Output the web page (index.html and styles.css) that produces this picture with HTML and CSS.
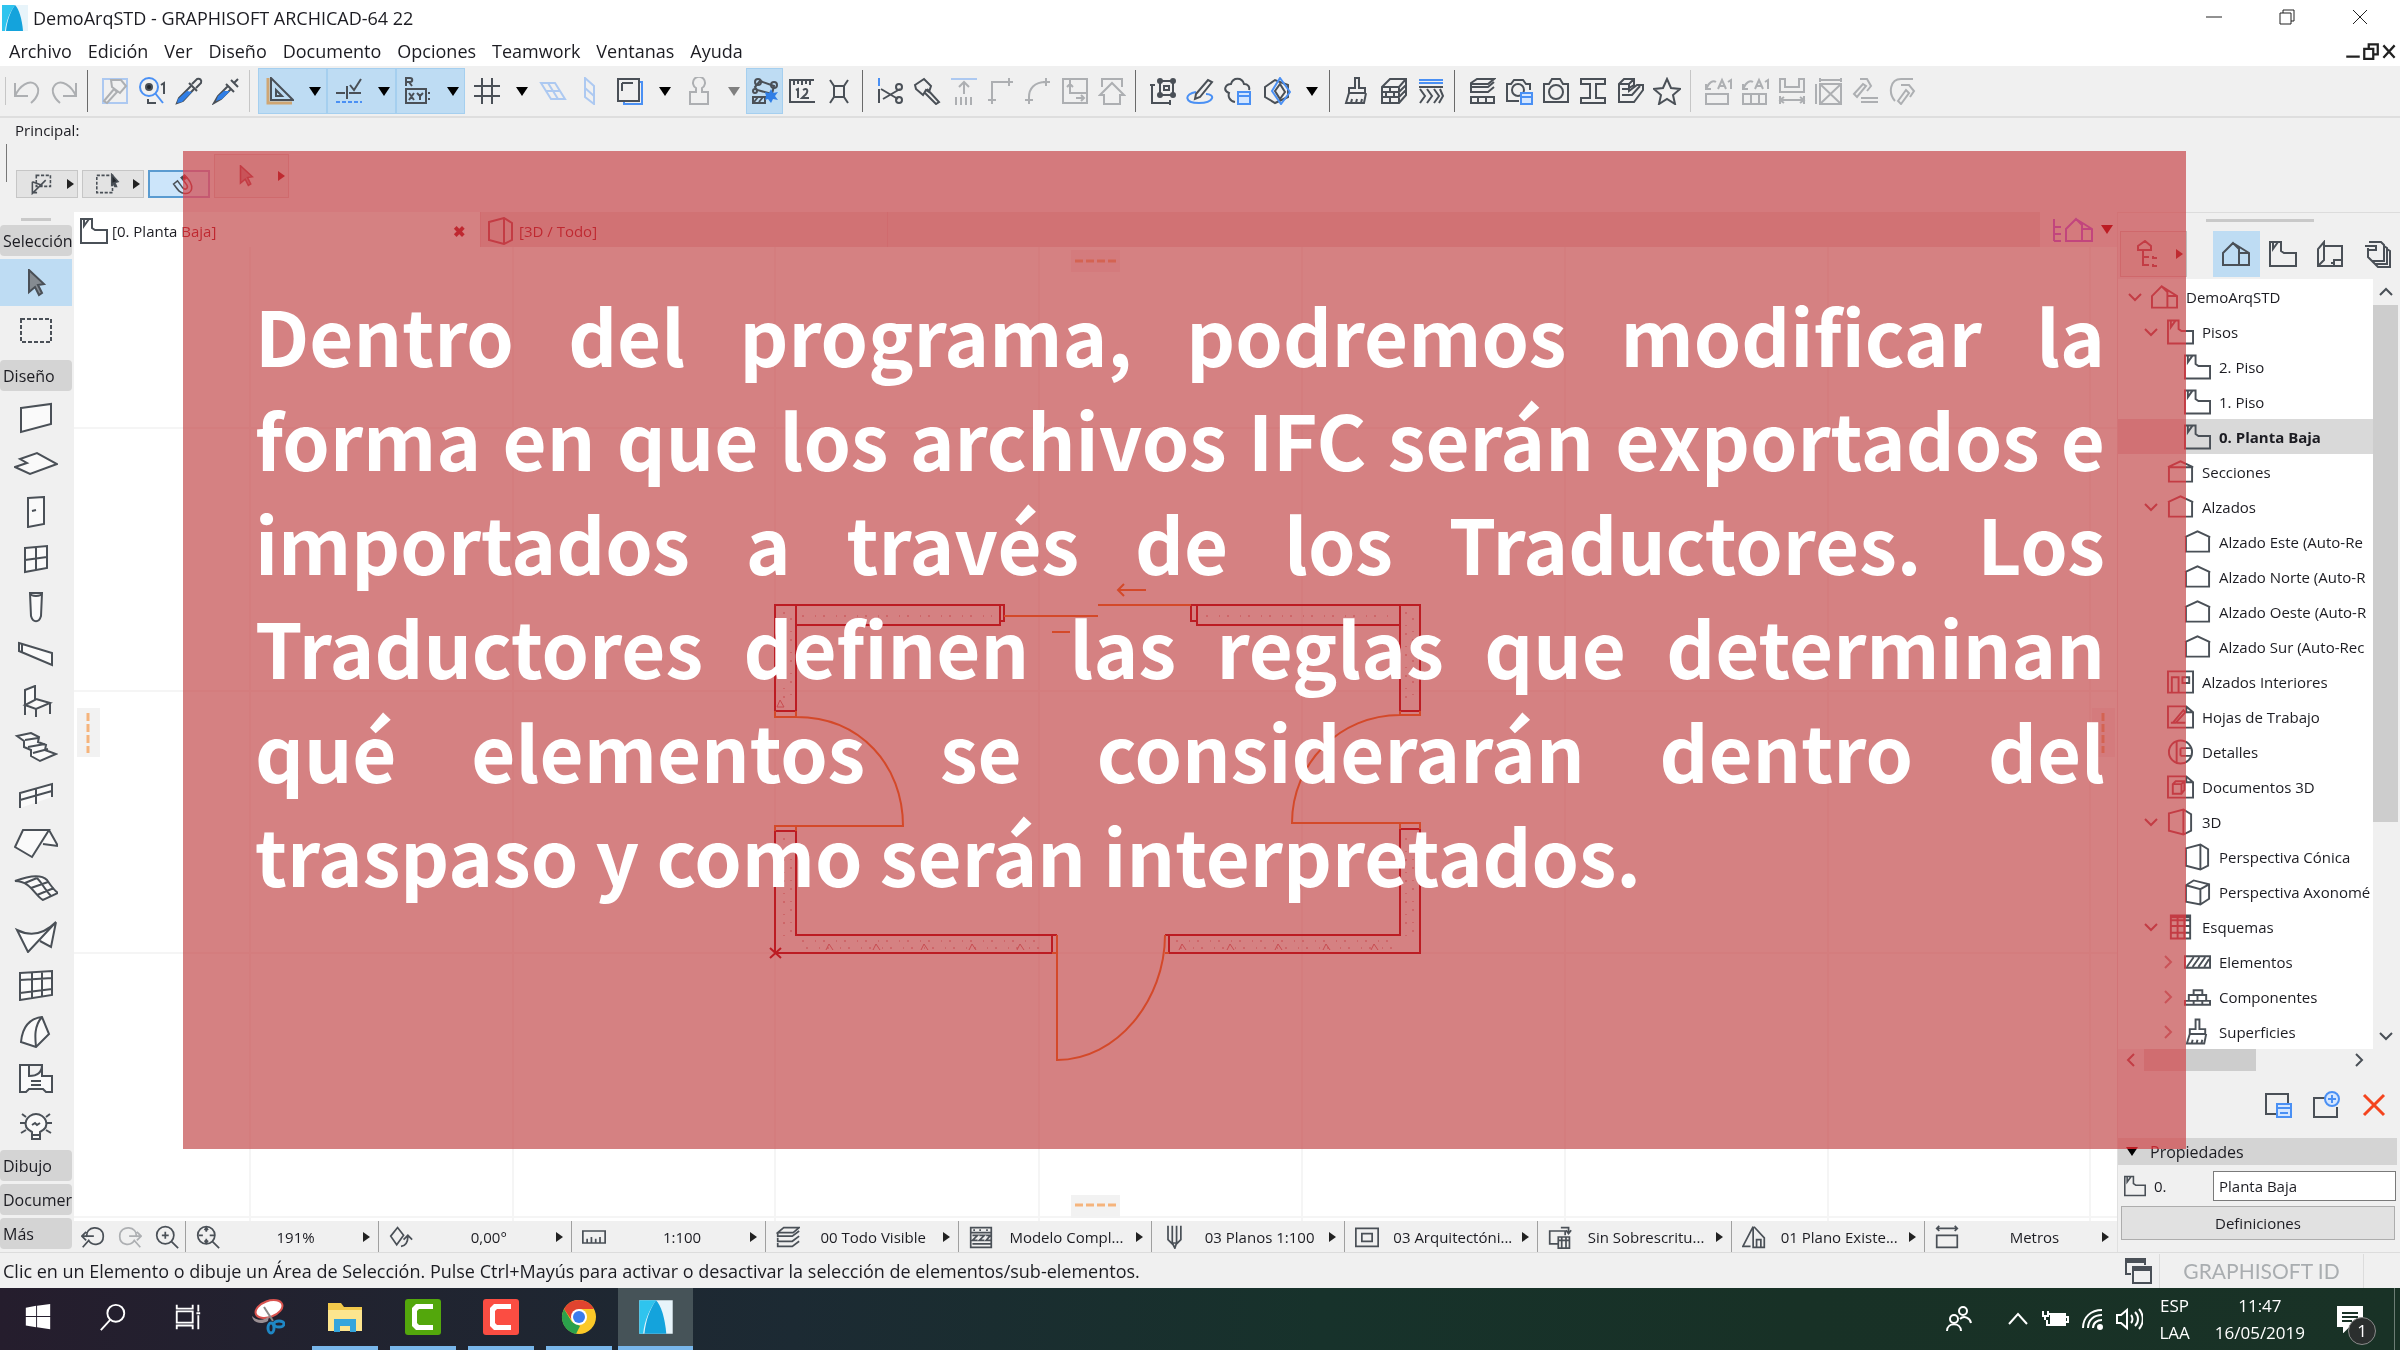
FILE: index.html
```html
<!DOCTYPE html>
<html lang="es">
  <head>
    <meta charset="UTF-8" />
    <title>DemoArqSTD - GRAPHISOFT ARCHICAD-64 22</title>
    <link rel="stylesheet" href="styles.css">
  </head>
  <body>
    <!-- Iconos -->
    <svg class="sprite" aria-hidden="true">
      <symbol id="logo" viewBox="0 0 28 28"><path fill="#e8f4fa" stroke="none" d="M1 1h26v26H1z"/><path fill="#2fc4ee" stroke="none" d="M1 1h13C9 8 5 17 4 27H1z"/><path fill="#14a3dc" stroke="none" d="M14 1c4 4 7 14 8 26H5C6 17 9 8 14 1z"/></symbol>
      <symbol id="undo" viewBox="0 0 28 28"><path d="M2 6v13h13M2 19C7 8 16 3 22 7c6 5 3 13-4 19"/></symbol>
      <symbol id="redo" viewBox="0 0 28 28"><path d="M26 6v13H13M26 19C21 8 12 3 6 7c-6 5-3 13 4 19"/></symbol>
      <symbol id="pickhammer" viewBox="0 0 28 28"><path class="blue" d="M2 2h24v24H2z"/><path d="M3 24 13 12l3 3L6 26zM10 3h10l5 6-6 7-8-6z"/></symbol>
      <symbol id="finder" viewBox="0 0 28 28"><circle class="blue" cx="11" cy="10" r="9"/><path class="blue" d="m17 16 8 10"/><circle class="solid" cx="11" cy="10" r="3"/><path d="M23 8l3-2v11M10 22v4h8"/></symbol>
      <symbol id="dropper" viewBox="0 0 28 28"><path d="m17 7 5-5c3-1 5 1 4 4l-5 5M14 6l8 8"/><path d="M16 9 4 21l-2 5 6-2 11-12"/><path class="bluefill" d="m12 14-9 8-1 4 5-1 10-10z"/></symbol>
      <symbol id="syringe" viewBox="0 0 28 28"><path d="m19 3 7 7M22 6l4-4M14 7l8 8M16 9 6 19l-4 7 7-4 10-10"/><path class="bluefill" d="m12 14-6 5-2 5 6-2 8-8z"/></symbol>
      <symbol id="setsquare" viewBox="0 0 28 28"><path d="M5 1v22h22zM10 13v6h6z"/><path class="tan" d="M2 1v25h24"/></symbol>
      <symbol id="snapline" viewBox="0 0 28 28"><path d="M1 16h9m4 0h12M12 9v13M15 8l4 5 7-11"/><path class="blue dash" d="M1 25h26"/></symbol>
      <symbol id="coord" viewBox="0 0 28 28"><path d="M2 9V1h4c3 0 3 4 0 4H2m3 0 3 4M2 12h20v14H2zM5 16l5 7m0-7-5 7M13 16l3 3 3-3m-3 3v4M25 15v2m0 4v2"/></symbol>
      <symbol id="grid" viewBox="0 0 28 28"><path d="M9 1v26M19 1v26M1 9h26M1 19h26"/></symbol>
      <symbol id="plane" viewBox="0 0 28 28"><path class="blue" d="M2 6h14l10 16H12zM7 14h14M9 6l10 16"/></symbol>
      <symbol id="vplane" viewBox="0 0 28 28"><path class="blue" d="M9 1v19l9 7V9zM9 11l9 8"/></symbol>
      <symbol id="sheets" viewBox="0 0 28 28"><path class="blue" d="M24 5h2v22H8v-2"/><path d="M2 2h21v22H2zM6 6v8M6 6h11"/></symbol>
      <symbol id="weight" viewBox="0 0 28 28"><path d="M11 11a6 6 0 1 1 6 0v4h6v12H5V15h6z"/></symbol>
      <symbol id="suspend" viewBox="0 0 28 28"><path d="m4 10 5-6 14 5-2 8L6 13z"/><circle cx="7" cy="5" r="3"/><circle cx="23" cy="8" r="3"/><circle cx="4" cy="14" r="2"/><path d="M2 20h12v6H2zm1 5 4-5m1 5 4-5"/><path class="bluefill" d="m20 12 2 4 5-1-3 4 3 4-5-1-2 4-3-4-3 1 1-4-1-4 4 1z"/></symbol>
      <symbol id="ruler12" viewBox="0 0 28 28"><path d="M26 3H2v22h25M6 3v5m4-5v4m4-4v5m4-4v3m4-4v5M8 13l2-1v9m5-8c5-3 6 2 1 6l-2 2h7"/></symbol>
      <symbol id="nodes" viewBox="0 0 28 28"><path d="M9 9h10v11H9zM5 3l4 6M23 3l-4 6M5 26l4-6m14 6-4-6"/></symbol>
      <symbol id="scissors" viewBox="0 0 28 28"><path class="blue" d="M3 1v8"/><path d="M3 12v14M5 12l17 10M7 22 24 12"/><circle cx="23" cy="10" r="3"/><circle cx="23" cy="23" r="3"/></symbol>
      <symbol id="axe" viewBox="0 0 28 28"><path d="M2 8 11 2l7 7-2 6-3-2-3 5-7-6zM14 12l12 13-3 2-12-12"/></symbol>
      <symbol id="raise" viewBox="0 0 28 28"><path class="blue" d="M1 2h26"/><path d="M14 5v12m-5-7 5-5 5 5M6 20v8m5-8v8m5-8v8m5-8v8"/></symbol>
      <symbol id="corner" viewBox="0 0 28 28"><path d="M5 20V5h17M1 23h8m-4-3v7M22 1v8m-3-4h7"/></symbol>
      <symbol id="fillet" viewBox="0 0 28 28"><path d="M5 20C5 12 10 5 22 5M1 23h8m-4-3v7M22 1v8m-3-4h7"/></symbol>
      <symbol id="resize" viewBox="0 0 28 28"><path d="M2 2h24v24H2zM9 2v14h17M9 16V7m-3 3 3-3 3 3M15 21h8m-3-3 3 3-3 3"/></symbol>
      <symbol id="explode" viewBox="0 0 28 28"><path d="M4 10V2h20v8M2 18 14 6l12 12h-4v9H6v-9z"/></symbol>
      <symbol id="trace" viewBox="0 0 28 28"><path d="M11 4h13v14H11z"/><circle cx="11" cy="4" r="2"/><circle cx="24" cy="4" r="2"/><circle cx="11" cy="18" r="2"/><circle cx="24" cy="18" r="2"/><path d="M3 8v18h18M1 8h5M21 23v5M15 9h5v4h-5z"/></symbol>
      <symbol id="markup" viewBox="0 0 28 28"><path class="blue" d="M10 15c-12 2-12 11 3 11s17-9 7-9"/><path d="M10 17 22 3l4 2-12 15-5 2z"/></symbol>
      <symbol id="cloud" viewBox="0 0 28 28"><path d="M12 25c-6-1-7-6-6-9-7-3-3-9 2-9 2-7 11-7 13 0 4 0 6 3 5 6"/><path class="bluebox" d="M15 15h12v12H15zM15 19h12"/></symbol>
      <symbol id="box" viewBox="0 0 28 28"><path d="M2 10 12 3l13 5v12l-13 6-10-6z"/><path class="blue" d="m17 1 10 14-9 12L9 14z"/><path d="m17 7 5 8-5 7-5-8z"/></symbol>
      <symbol id="brush" viewBox="0 0 28 28"><path d="M12 1h4v10h6v5H6v-5h6zM6 16 3 26h18l2-10M8 26l1-4m4 4 1-4m4 4 1-4"/></symbol>
      <symbol id="bricks" viewBox="0 0 28 28"><path d="M2 10 10 2h16v16l-7 8H2zM2 10h17l7-8M19 10v16M2 15h17l7-7M2 20h17l7-7M10 10v5m-4 0v5m8-5v5m-4 0v6"/></symbol>
      <symbol id="hatch" viewBox="0 0 28 28"><path class="blue" d="M2 3h24M2 6h24"/><path d="M2 10h24M3 12l5 7-5 7m7-14 5 7-5 7m7-14 5 7-5 7m6-14 3 7-4 7"/></symbol>
      <symbol id="layers" viewBox="0 0 28 28"><path d="m3 6 6-4h17l-6 5H3zM3 6v4h17l6-5M3 10v5h17l6-5M3 20h23v6H3zm7 0v6m8-6v6"/></symbol>
      <symbol id="camlock" viewBox="0 0 28 28"><path d="M14 24H2V7h4l3-4h9l3 4h4v6"/><circle cx="13" cy="13" r="6"/><path class="bluebox" d="M16 16h11v11H16zM16 20h11"/></symbol>
      <symbol id="camera" viewBox="0 0 28 28"><path d="M2 7h5l3-5h8l3 5h5v18H2z"/><circle cx="14" cy="15" r="7"/></symbol>
      <symbol id="beamprofile" viewBox="0 0 28 28"><path d="M2 2h24v5h-9v14h9v5H2v-5h9V7H2z"/></symbol>
      <symbol id="profile3d" viewBox="0 0 28 28"><path d="m3 7 5-5h10v6l-5 3v3l8-6h6v5l-9 12H3zM3 7h10m0 0 5-5M6 12h7v-5M6 18h10l8-9"/></symbol>
      <symbol id="star" viewBox="0 0 28 28"><path d="m14 2 4 9 9 1-7 6 2 9-8-5-8 5 2-9-7-6 9-1z"/></symbol>
      <symbol id="label1" viewBox="0 0 28 28"><path d="M2 7v5h5M2 12C5 5 9 3 12 5M14 12l4-9 4 9m-7-3h6M24 5l3-2v9M2 17h22v10H2z"/></symbol>
      <symbol id="label2" viewBox="0 0 28 28"><path d="M2 7v5h5M2 12C5 5 9 3 12 5M14 12l4-9 4 9m-7-3h6M24 5l3-2v9M2 17h23v10H2zm8 0v10m8-10v10"/></symbol>
      <symbol id="dimension" viewBox="0 0 28 28"><path d="M2 2v13h24V2h-5v8H7V2zM2 19v8m24-8v8M2 23h24M6 20l-4 3 4 3m16-6 4 3-4 3"/></symbol>
      <symbol id="areabox" viewBox="0 0 28 28"><path d="M5 7h21v20H5zM5 7l21 20M26 7 5 27M5 3h21M5 1v4M26 1v4M1 7v20"/></symbol>
      <symbol id="hammer" viewBox="0 0 28 28"><path d="m2 17 9-10 3 2-9 11zM8 2h7l4 7-4 5M9 21h17M9 25h17"/></symbol>
      <symbol id="hammer2" viewBox="0 0 28 28"><path d="M6 24C-1 16 1 2 12 2h12M9 24l8-11 3 3-8 11zM12 8h8l5 6-4 6"/></symbol>
      <symbol id="editnodes" viewBox="0 0 28 28"><path class="dash" d="M8 3h18v14H8z"/><path d="M3 11v15L20 9M3 11l13 5M3 25h6"/></symbol>
      <symbol id="marqueearrow" viewBox="0 0 28 28"><path class="dash" d="M1 3h20v22H1z"/><path class="solid" d="m20 2 8 9-4 1 2 5h-2l-2-4-2 2z"/></symbol>
      <symbol id="magnet" viewBox="0 0 28 28"><path d="m2 14 5-4 6 8c4 5 9 1 5-4l-6-8 4-3c15 14 9 24 0 23-6 0-9-5-14-12z"/><path class="solid" d="m12 6 4-3 3 3-4 3z"/></symbol>
      <symbol id="pointer" viewBox="0 0 28 28"><path class="grey" d="m7 1 15 14-6 1 4 8-3 2-4-8-6 5z"/></symbol>
      <symbol id="story" viewBox="0 0 28 28"><path d="M1 2h11v9l3 2h12v13H1zM4 2v7l5-7"/></symbol>
      <symbol id="cone" viewBox="0 0 28 28"><path d="m2 5 15-4 8 5v17l-8 4-15-4zM17 1v26"/></symbol>
      <symbol id="axon" viewBox="0 0 28 28"><path d="m2 7 8-5 16 4v15l-9 6-15-3zM2 7l15 4 9-5M17 11v16"/></symbol>
      <symbol id="house" viewBox="0 0 28 28"><path d="M1 25V13L11 3l6 6v16zM11 3l16 10v12H17M17 13h10"/></symbol>
      <symbol id="housetree" viewBox="0 0 42 28"><path d="M15 25V13L25 3l6 6v16zM25 3l16 10v12H31M31 13h10M3 3v22M3 11h7M3 18h7M3 25h7"/></symbol>
      <symbol id="elev" viewBox="0 0 28 28"><path d="M1 9 14 3l13 6h-1v15H2V9"/></symbol>
      <symbol id="section" viewBox="0 0 28 28"><path d="M1 9 14 3l13 6h-1v15H2V9h24"/></symbol>
      <symbol id="layout" viewBox="0 0 28 28"><path d="M8 6h18v20H2V9l6-7v18l-6 6M18 26v-6h8M15 23h3"/></symbol>
      <symbol id="book" viewBox="0 0 28 28"><path d="M6 2h12l3 3v16H9l-4-4V8M2 6h11v4H5M21 6l3 2v16H12l-3-3M24 9l3 2v16H15l-3-3"/></symbol>
      <symbol id="tree" viewBox="0 0 28 28"><path d="M4 10V6l7-5 6 5v4zM9 10v15h6M9 17h6M19 16v2h4m-4 6v2h4"/></symbol>
      <symbol id="interior" viewBox="0 0 28 28"><path d="M1 3h26v22H1zM5 25V9h7v16M16 9h7v6h-7z"/></symbol>
      <symbol id="worksheet" viewBox="0 0 28 28"><path d="M1 3h19l7 6v16H1zM20 3v6h7M6 20 17 7l2 2L9 20H4m6 0h9"/></symbol>
      <symbol id="detail" viewBox="0 0 28 28"><circle cx="14" cy="14" r="12"/><path d="M10 3v22M14 10h12M14 18h12M14 10v8"/></symbol>
      <symbol id="doc3d" viewBox="0 0 28 28"><path d="M1 3h19l7 6v16H1zM20 3v6h7"/><path d="m6 11 3-3h9v9l-3 4H6zM6 11h9v9m0-9 3-3"/></symbol>
      <symbol id="schedule" viewBox="0 0 28 28"><path d="M4 2h20v24H4zM11 2v24M18 2v24M4 7h20M4 13h20M4 20h20M4 4h20"/></symbol>
      <symbol id="elements" viewBox="0 0 28 28"><path d="M1 8h26v12H1zM3 19l7-10m-1 10 7-10m-1 10 7-10m-1 10 5-8"/></symbol>
      <symbol id="components" viewBox="0 0 28 28"><path d="M10 7h9v5h-9zM5 12h18v6H5zm9 0v6M1 18h26v4H1zm9 0v4m9-4v4"/></symbol>
      <symbol id="marquee" viewBox="0 0 44 32"><path class="dash" d="M7 5h30v23H7z"/></symbol>
      <symbol id="wall" viewBox="0 0 44 32"><path d="m7 6 30-4v20L7 30z"/></symbol>
      <symbol id="slab" viewBox="0 0 44 32"><path d="m1 18 12-4-7-4 17-6 20 11-27 10z"/></symbol>
      <symbol id="door" viewBox="0 0 44 32"><path d="m14 2 16-1v27l-16 3zM18 15l4-1"/></symbol>
      <symbol id="window" viewBox="0 0 44 32"><path d="m11 5 22-2v22l-22 4zM22 4v23M11 17l22-3"/></symbol>
      <symbol id="column" viewBox="0 0 44 32"><path d="M16 2h12l-1 23c-2 7-8 7-10 0zM16 2c1 4 11 4 12 0"/></symbol>
      <symbol id="beam" viewBox="0 0 44 32"><path d="m5 5 33 10v12L5 13zM8 6v8"/></symbol>
      <symbol id="chair" viewBox="0 0 44 32"><path d="M11 30V5l10-4v14l-10 5 11 4 14-6-14-4M22 24v8M36 18v11"/></symbol>
      <symbol id="stair" viewBox="0 0 44 32"><path d="m3 4 14-3 8 4-1 5 8 3-1 5 11 4-16 7-9-5v-6l-7-3v-6zM11 8l13-2M14 15l17-3M19 21l15-4"/></symbol>
      <symbol id="railing" viewBox="0 0 44 32"><path d="M6 28V13l32-9v13M22 9v15M6 20l32-9"/></symbol>
      <symbol id="roof" viewBox="0 0 44 32"><path d="M9 3h26L18 30 1 20zM35 3l9 16-15-2"/></symbol>
      <symbol id="shell" viewBox="0 0 44 32"><path d="M1 7c16-6 27-6 32-1 4 6 8 11 11 13l-15 7C21 22 17 7 1 7zM11 9l12-5M17 14l17-6M23 21l17-7M23 4c6 6 7 11 14 18"/></symbol>
      <symbol id="meshsail" viewBox="0 0 44 32"><path d="M3 9c14 7 27 4 39-8L14 31zM42 1l-5 25-11-6"/></symbol>
      <symbol id="curtain" viewBox="0 0 44 32"><path d="m6 4 32-2v24L6 31zM18 3v26M28 2v25M6 11l32-2M6 24l32-4"/></symbol>
      <symbol id="morph" viewBox="0 0 44 32"><path d="M28 1C12 3 8 15 7 26l15 5 13-13zM28 1c-8 9-7 20-6 30"/></symbol>
      <symbol id="zone" viewBox="0 0 44 32"><path d="M6 2h22v11h10v16h-6l-3-3H15l-3 3H6zM15 2v11c9 0 13-4 13-11M17 18h10M17 22h10"/></symbol>
      <symbol id="lamp" viewBox="0 0 44 32"><path d="M18 22c-12-6-5-18 4-18s16 12 4 18v7h-8zM18 25h8M18 15l3-2 2 2 3-2M8 4l4 3M6 13h5M7 23l5-3M36 4l-4 3m6 6h-5m4 10-5-3"/></symbol>
      <symbol id="zoomback" viewBox="0 0 28 28"><path d="M7 14C4 1 26-1 26 13c0 11-13 12-17 5L2 26M1 13h14M6 8l-5 5 5 5"/></symbol>
      <symbol id="zoomnext" viewBox="0 0 28 28"><path d="M21 14C24 1 2-1 2 13c0 11 13 12 17 5l7 8M27 13H13M22 8l5 5-5 5"/></symbol>
      <symbol id="zoomin" viewBox="0 0 28 28"><circle cx="12" cy="12" r="10"/><path d="m19 19 8 8M12 8v8m-4-4h8"/></symbol>
      <symbol id="zoomfit" viewBox="0 0 28 28"><circle cx="12" cy="12" r="10"/><path d="m19 19 8 8M12 3v5m-2-2 2-3 2 3M12 21v-5m-2 2 2 3 2-3M3 12h5m13 0h-5"/></symbol>
      <symbol id="rotate" viewBox="0 0 28 28"><path d="m2 13 8-10 7 9-8 11zM14 25c6-1 8-5 8-12m-5 4 5-5 5 5"/></symbol>
      <symbol id="scale" viewBox="0 0 28 28"><path d="M1 7h26v14H1zM6 21v-5m5 5v-7m5 7v-5m5 5v-7"/></symbol>
      <symbol id="layerstack" viewBox="0 0 28 28"><path d="m2 9 7-6h18l-7 6zM2 9v4h17l8-6M2 15v4h17l8-6M2 21v4h17l8-6"/></symbol>
      <symbol id="model" viewBox="0 0 28 28"><path d="M2 3h24v23H2zM2 9h24M5 6h2m5 0h2m6 0h2M4 12h6l-6 6h6m2-6h6l-6 6h6m2-6h5l-5 6h5M4 22h22"/></symbol>
      <symbol id="pen" viewBox="0 0 28 28"><path d="M7 1v16l5 5V1M17 1v21l5-5V1M12 21h5l-2 6z"/></symbol>
      <symbol id="frame" viewBox="0 0 28 28"><path d="M1 4h26v21H1zM8 10h12v9H8z"/></symbol>
      <symbol id="override" viewBox="0 0 28 28"><path d="M12 22H2V7h18v5M12 14h13v13H12zm0 4h13m-9-4v13m5-13v13M15 3h9v6m-3-3 3 4 3-4"/></symbol>
      <symbol id="renovate" viewBox="0 0 28 28"><path d="m14 2 12 13v11H13V2L1 25h9M17 26v-9h5v9"/></symbol>
      <symbol id="units" viewBox="0 0 28 28"><path d="M2 12h24v14H2zM2 4h24M5 1 2 4l3 3m18-6 3 3-3 3"/></symbol>
      <symbol id="viewset" viewBox="0 0 28 28"><path d="M2 3h22v20H2z"/><path class="bluebox" d="M13 13h14v13H13zM13 17h14m-11 5h8"/></symbol>
      <symbol id="newfolder" viewBox="0 0 28 28"><path d="M14 7H2v19h23V16"/><circle class="bluebox" cx="20" cy="8" r="7"/><path class="blue" d="M20 4v8m-4-4h8"/></symbol>
      <symbol id="cross" viewBox="0 0 28 28"><path d="m4 4 20 20M24 4 4 24"/></symbol>
      <symbol id="down" viewBox="0 0 14 14"><path d="m1 4 6 6 6-6"/></symbol>
      <symbol id="right" viewBox="0 0 14 14"><path d="m4 1 6 6-6 6"/></symbol>
    </svg>

    <header class="titlebar">
      <svg class="app-logo"><use href="#logo"/></svg>
      <h1 class="app-title">DemoArqSTD - GRAPHISOFT ARCHICAD-64 22</h1>
      <button class="win-button" aria-label="Minimizar"><svg viewBox="0 0 16 16"><path d="M0 8h16"/></svg></button>
      <button class="win-button" aria-label="Restaurar"><svg viewBox="0 0 16 16"><path d="M1 4h11v11H1zM4 4V1h11v11h-3"/></svg></button>
      <button class="win-button" aria-label="Cerrar"><svg viewBox="0 0 16 16"><path d="m1 1 14 14M15 1 1 15"/></svg></button>
    </header>

    <nav class="menubar">
      <a href="#">Archivo</a>
      <a href="#">Edición</a>
      <a href="#">Ver</a>
      <a href="#">Diseño</a>
      <a href="#">Documento</a>
      <a href="#">Opciones</a>
      <a href="#">Teamwork</a>
      <a href="#">Ventanas</a>
      <a href="#">Ayuda</a>
      <div class="doc-buttons">
        <button aria-label="Minimizar documento"><svg viewBox="0 0 16 16"><path d="M2 13h12"/></svg></button>
        <button aria-label="Restaurar documento"><svg viewBox="0 0 16 16"><path d="M2 6h8v9H2zM6 6V2h8v9h-4"/></svg></button>
        <button aria-label="Cerrar documento"><svg viewBox="0 0 16 16"><path d="m3 3 10 11M13 3 3 14"/></svg></button>
      </div>
    </nav>

    <div class="toolbar">
      <span class="sep light first"></span>
      <button class="tb off" aria-label="Deshacer"><svg><use href="#undo"/></svg></button>
      <button class="tb off" aria-label="Rehacer"><svg><use href="#redo"/></svg></button>
      <span class="sep"></span>
      <button class="tb off" aria-label="Buscar y seleccionar"><svg><use href="#pickhammer"/></svg></button>
      <button class="tb" aria-label="Buscar"><svg><use href="#finder"/></svg></button>
      <button class="tb" aria-label="Capturar parámetros"><svg><use href="#dropper"/></svg></button>
      <button class="tb" aria-label="Inyectar parámetros"><svg><use href="#syringe"/></svg></button>
      <span class="sep light"></span>
      <button class="tb drop on" aria-label="Guías"><svg><use href="#setsquare"/></svg><i class="caret"></i></button>
      <button class="tb drop on" aria-label="Puntos de forzado"><svg><use href="#snapline"/></svg><i class="caret"></i></button>
      <button class="tb drop on" aria-label="Coordenadas"><svg><use href="#coord"/></svg><i class="caret"></i></button>
      <button class="tb drop" aria-label="Trama"><svg><use href="#grid"/></svg><i class="caret"></i></button>
      <button class="tb off" aria-label="Plano de edición"><svg><use href="#plane"/></svg></button>
      <button class="tb off" aria-label="Plano vertical"><svg><use href="#vplane"/></svg></button>
      <button class="tb drop" aria-label="Referencia"><svg><use href="#sheets"/></svg><i class="caret"></i></button>
      <button class="tb drop off" aria-label="Gravedad"><svg><use href="#weight"/></svg><i class="caret"></i></button>
      <button class="tb on" aria-label="Suspender grupos"><svg><use href="#suspend"/></svg></button>
      <button class="tb" aria-label="Medir"><svg><use href="#ruler12"/></svg></button>
      <button class="tb" aria-label="Nodos"><svg><use href="#nodes"/></svg></button>
      <span class="sep"></span>
      <button class="tb" aria-label="Recortar"><svg><use href="#scissors"/></svg></button>
      <button class="tb" aria-label="Dividir"><svg><use href="#axe"/></svg></button>
      <button class="tb off" aria-label="Ajustar"><svg><use href="#raise"/></svg></button>
      <button class="tb off" aria-label="Intersecar"><svg><use href="#corner"/></svg></button>
      <button class="tb off" aria-label="Empalme"><svg><use href="#fillet"/></svg></button>
      <button class="tb off" aria-label="Redimensionar"><svg><use href="#resize"/></svg></button>
      <button class="tb off" aria-label="Descomponer"><svg><use href="#explode"/></svg></button>
      <span class="sep"></span>
      <button class="tb" aria-label="Agrupar"><svg><use href="#trace"/></svg></button>
      <button class="tb" aria-label="Revisión"><svg><use href="#markup"/></svg></button>
      <button class="tb" aria-label="Nube"><svg><use href="#cloud"/></svg></button>
      <button class="tb drop" aria-label="Vista 3D"><svg><use href="#box"/></svg><i class="caret"></i></button>
      <span class="sep"></span>
      <button class="tb" aria-label="Superficies"><svg><use href="#brush"/></svg></button>
      <button class="tb" aria-label="Materiales"><svg><use href="#bricks"/></svg></button>
      <button class="tb" aria-label="Compuestos"><svg><use href="#hatch"/></svg></button>
      <span class="sep"></span>
      <button class="tb" aria-label="Capas"><svg><use href="#layers"/></svg></button>
      <button class="tb" aria-label="Opciones de foto"><svg><use href="#camlock"/></svg></button>
      <button class="tb" aria-label="Foto"><svg><use href="#camera"/></svg></button>
      <button class="tb" aria-label="Perfiles"><svg><use href="#beamprofile"/></svg></button>
      <button class="tb" aria-label="Perfil 3D"><svg><use href="#profile3d"/></svg></button>
      <button class="tb" aria-label="Favoritos"><svg><use href="#star"/></svg></button>
      <span class="sep light"></span>
      <button class="tb off" aria-label="Etiqueta"><svg><use href="#label1"/></svg></button>
      <button class="tb off" aria-label="Etiqueta doble"><svg><use href="#label2"/></svg></button>
      <button class="tb off" aria-label="Cota"><svg><use href="#dimension"/></svg></button>
      <button class="tb off" aria-label="Área"><svg><use href="#areabox"/></svg></button>
      <button class="tb off" aria-label="Construir"><svg><use href="#hammer"/></svg></button>
      <button class="tb off" aria-label="Demoler"><svg><use href="#hammer2"/></svg></button>
    </div>

    <section class="infobox">
      <p class="infobox-title">Principal:</p>
      <div class="infobox-row">
        <button class="mode" aria-label="Edición de nodos"><svg><use href="#editnodes"/></svg><i class="caret side"></i></button>
        <button class="mode" aria-label="Selección por área"><svg><use href="#marqueearrow"/></svg><i class="caret side"></i></button>
        <button class="mode active" aria-label="Selección rápida"><svg><use href="#magnet"/></svg></button>
        <button class="mode tall" aria-label="Flecha"><svg><use href="#pointer"/></svg><i class="caret side"></i></button>
      </div>
    </section>

    <main class="workspace">
      <aside class="toolbox">
        <span class="grip"></span>
        <h2 class="tool-head">Selección</h2>
        <button class="tool selected" aria-label="Flecha"><svg><use href="#pointer"/></svg></button>
        <button class="tool" aria-label="Área"><svg><use href="#marquee"/></svg></button>
        <h2 class="tool-head design">Diseño</h2>
        <div class="tool-list">
          <button class="tool" aria-label="Muro"><svg><use href="#wall"/></svg></button>
          <button class="tool" aria-label="Forjado"><svg><use href="#slab"/></svg></button>
          <button class="tool" aria-label="Puerta"><svg><use href="#door"/></svg></button>
          <button class="tool" aria-label="Ventana"><svg><use href="#window"/></svg></button>
          <button class="tool" aria-label="Pilar"><svg><use href="#column"/></svg></button>
          <button class="tool" aria-label="Viga"><svg><use href="#beam"/></svg></button>
          <button class="tool" aria-label="Objeto"><svg><use href="#chair"/></svg></button>
          <button class="tool" aria-label="Escalera"><svg><use href="#stair"/></svg></button>
          <button class="tool" aria-label="Barandilla"><svg><use href="#railing"/></svg></button>
          <button class="tool" aria-label="Cubierta"><svg><use href="#roof"/></svg></button>
          <button class="tool" aria-label="Shell"><svg><use href="#shell"/></svg></button>
          <button class="tool" aria-label="Malla"><svg><use href="#meshsail"/></svg></button>
          <button class="tool" aria-label="Muro cortina"><svg><use href="#curtain"/></svg></button>
          <button class="tool" aria-label="Forma"><svg><use href="#morph"/></svg></button>
          <button class="tool" aria-label="Zona"><svg><use href="#zone"/></svg></button>
          <button class="tool" aria-label="Lámpara"><svg><use href="#lamp"/></svg></button>
        </div>
        <h2 class="tool-head">Dibujo</h2>
        <h2 class="tool-head">Documer</h2>
        <h2 class="tool-head">Más</h2>
      </aside>

      <section class="drawing">
        <div class="tabs">
          <button class="tab current"><svg><use href="#story"/></svg>[0. Planta Baja]<b class="tab-close">✖</b></button>
          <button class="tab"><svg><use href="#cone"/></svg>[3D / Todo]</button>
          <button class="tab-menu" aria-label="Vistas"><svg><use href="#housetree"/></svg><i class="caret"></i></button>
        </div>

        <svg class="plan" viewBox="74 247 2043 974">
          <path class="plan-grid" d="M250 247v974M513 247v974M775 247v974M1039 247v974M1302 247v974M1565 247v974M1828 247v974M2090 247v974M74 428h2043M74 691h2043M74 953h2043M74 1217h2043"/>
          <g class="plan-handle">
            <path d="M77 708h23v49H77zM1071 250h49v22h-49zM1071 1195h49v23h-49zM2092 708h23v49h-23z"/>
            <path class="handle-dash" d="M88 713v40M1075 261h41M1075 1205h41M2103 713v40"/>
          </g>
          <path class="speckle" d="M784 612v92M791 618v80M784 838v105M791 846v92M1406 612v92M1413 618v80M1406 838v105M1413 846v92M802 616h190M1206 616h186M802 941h240M806 948h236M1176 941h220M1180 948h216"/>
          <path class="speckle-tri" d="m777 626 3-8 4 8zm0 81 3-7 4 7zm49 243 3-6 4 6m40 0 3-6 4 6m41 0 3-6 4 6m41 0 3-6 4 6m41 0 3-6 4 6m155 0 3-6 4 6m41 0 3-6 4 6m41 0 3-6 4 6m41 0 3-6 4 6m41 0 3-6 4 6"/>
          <path class="wall-line" d="M775 711V605h225v20H796v86zM796 605v20M1000 605h4v16h-4M775 831h21v104h256v18H775zM1052 935h5M1420 711V605h-223v20h203v86zM1400 605v20M1197 605h-6v16h6M1420 829h-20v106h-231v18h251zM1169 935h-4"/>
          <path class="door-line" d="M775 711v6h21v-6M775 831v-5h128c0-60-42-109-107-109M796 831v-5M1420 711v4h-20v-4M1400 715c-60 0-108 48-108 108h128v6M1400 823v6M1057 935v125c60 0 108-60 108-125M1052 953h5M1165 953h4M1004 616h94M1098 605h93M1146 590h-28M1124 584l-6 6 6 6M1052 632h18"/>
          <path class="origin" d="m770 948 11 10M781 948l-11 10"/>
        </svg>

        <div class="quickbar">
          <div class="zoom-tools">
            <button aria-label="Zoom previo"><svg><use href="#zoomback"/></svg></button>
            <button class="off" aria-label="Zoom siguiente"><svg><use href="#zoomnext"/></svg></button>
            <button aria-label="Aumentar"><svg><use href="#zoomin"/></svg></button>
          </div>
          <button class="quick short"><svg><use href="#zoomfit"/></svg><span>191%</span><i class="caret side"></i></button>
          <button class="quick short"><svg><use href="#rotate"/></svg><span>0,00°</span><i class="caret side"></i></button>
          <button class="quick short"><svg><use href="#scale"/></svg><span>1:100</span><i class="caret side"></i></button>
          <button class="quick"><svg><use href="#layerstack"/></svg><span>00 Todo Visible</span><i class="caret side"></i></button>
          <button class="quick"><svg><use href="#model"/></svg><span>Modelo Compl...</span><i class="caret side"></i></button>
          <button class="quick"><svg><use href="#pen"/></svg><span>03 Planos 1:100</span><i class="caret side"></i></button>
          <button class="quick"><svg><use href="#frame"/></svg><span>03 Arquitectóni...</span><i class="caret side"></i></button>
          <button class="quick"><svg><use href="#override"/></svg><span>Sin Sobrescritu...</span><i class="caret side"></i></button>
          <button class="quick"><svg><use href="#renovate"/></svg><span>01 Plano Existe...</span><i class="caret side"></i></button>
          <button class="quick short"><svg><use href="#units"/></svg><span>Metros</span><i class="caret side"></i></button>
        </div>
      </section>

      <aside class="navigator">
        <span class="grip wide"></span>
        <div class="nav-tabs">
          <button class="nav-chooser" aria-label="Selector de proyecto"><svg><use href="#tree"/></svg><i class="caret side"></i></button>
          <button class="nav-tab on" aria-label="Mapa de proyecto"><svg><use href="#house"/></svg></button>
          <button class="nav-tab" aria-label="Mapa de vistas"><svg><use href="#story"/></svg></button>
          <button class="nav-tab" aria-label="Libro de planos"><svg><use href="#layout"/></svg></button>
          <button class="nav-tab" aria-label="Publicador"><svg><use href="#book"/></svg></button>
        </div>
        <div class="nav-body">
          <ul class="nav-tree">
            <li class="l0"><svg class="chev"><use href="#down"/></svg><svg class="ico"><use href="#house"/></svg>DemoArqSTD</li>
            <li class="l1"><svg class="chev"><use href="#down"/></svg><svg class="ico"><use href="#story"/></svg>Pisos</li>
            <li class="l2"><i class="chev"></i><svg class="ico"><use href="#story"/></svg>2. Piso</li>
            <li class="l2"><i class="chev"></i><svg class="ico"><use href="#story"/></svg>1. Piso</li>
            <li class="l2 selected"><i class="chev"></i><svg class="ico"><use href="#story"/></svg>0. Planta Baja</li>
            <li class="l1"><i class="chev"></i><svg class="ico"><use href="#section"/></svg>Secciones</li>
            <li class="l1"><svg class="chev"><use href="#down"/></svg><svg class="ico"><use href="#elev"/></svg>Alzados</li>
            <li class="l2"><i class="chev"></i><svg class="ico"><use href="#elev"/></svg>Alzado Este (Auto-Re</li>
            <li class="l2"><i class="chev"></i><svg class="ico"><use href="#elev"/></svg>Alzado Norte (Auto-R</li>
            <li class="l2"><i class="chev"></i><svg class="ico"><use href="#elev"/></svg>Alzado Oeste (Auto-R</li>
            <li class="l2"><i class="chev"></i><svg class="ico"><use href="#elev"/></svg>Alzado Sur (Auto-Rec</li>
            <li class="l1"><i class="chev"></i><svg class="ico"><use href="#interior"/></svg>Alzados Interiores</li>
            <li class="l1"><i class="chev"></i><svg class="ico"><use href="#worksheet"/></svg>Hojas de Trabajo</li>
            <li class="l1"><i class="chev"></i><svg class="ico"><use href="#detail"/></svg>Detalles</li>
            <li class="l1"><i class="chev"></i><svg class="ico"><use href="#doc3d"/></svg>Documentos 3D</li>
            <li class="l1"><svg class="chev"><use href="#down"/></svg><svg class="ico"><use href="#cone"/></svg>3D</li>
            <li class="l2"><i class="chev"></i><svg class="ico"><use href="#cone"/></svg>Perspectiva Cónica</li>
            <li class="l2"><i class="chev"></i><svg class="ico"><use href="#axon"/></svg>Perspectiva Axonomé</li>
            <li class="l1"><svg class="chev"><use href="#down"/></svg><svg class="ico"><use href="#schedule"/></svg>Esquemas</li>
            <li class="l2"><svg class="chev thin"><use href="#right"/></svg><svg class="ico"><use href="#elements"/></svg>Elementos</li>
            <li class="l2"><svg class="chev thin"><use href="#right"/></svg><svg class="ico"><use href="#components"/></svg>Componentes</li>
            <li class="l2"><svg class="chev thin"><use href="#right"/></svg><svg class="ico"><use href="#brush"/></svg>Superficies</li>
          </ul>
          <div class="vscroll">
            <svg class="up"><use href="#down"/></svg>
            <span class="thumb"></span>
            <svg><use href="#down"/></svg>
          </div>
        </div>
        <div class="hscroll">
          <svg class="back"><use href="#right"/></svg>
          <span class="thumb"></span>
          <svg><use href="#right"/></svg>
        </div>
        <div class="nav-actions">
          <button aria-label="Definiciones de vista"><svg><use href="#viewset"/></svg></button>
          <button aria-label="Nuevo"><svg><use href="#newfolder"/></svg></button>
          <button class="delete" aria-label="Borrar"><svg><use href="#cross"/></svg></button>
        </div>
        <h2 class="props-head"><i class="caret"></i>Propiedades</h2>
        <div class="props-row">
          <svg><use href="#story"/></svg>
          <label for="pisoNombre">0.</label>
          <input type="text" id="pisoNombre" name="pisoNombre" value="Planta Baja" />
        </div>
        <button class="props-button">Definiciones</button>
      </aside>
    </main>

    <footer class="statusbar">
      <p>Clic en un Elemento o dibuje un Área de Selección. Pulse Ctrl+Mayús para activar o desactivar la selección de elementos/sub-elementos.</p>
      <svg viewBox="0 0 28 28"><path d="M21 8V2H2v15h5M9 10h18v16H9z"/><path class="thick" d="M2 4h19M9 12h18"/></svg>
      <span class="brand">GRAPHISOFT ID</span>
    </footer>

    <div class="taskbar">
      <button class="task small" aria-label="Inicio"><svg viewBox="0 0 32 32"><path fill="#fff" d="m3 6 11-2v11H3zm12-2 14-2v13H15zM3 16h11v11L3 25zm12 0h14v13l-14-2z"/></svg></button>
      <button class="task small" aria-label="Buscar"><svg viewBox="0 0 32 32"><g class="white"><circle cx="19" cy="12" r="9"/><path d="M13 19 3 30"/></g></svg></button>
      <button class="task small" aria-label="Vista de tareas"><svg viewBox="0 0 32 32"><path class="white" d="M4 10h17v12H4zM4 3v4h17V3M4 29v-4h17v4M27 3v7m0 4v15M25 12h4"/></svg></button>
      <button class="task snip" aria-label="Recortes"><svg viewBox="0 0 36 36"><ellipse cx="20" cy="10" rx="14" ry="8" fill="#fff" stroke="#d9534f" stroke-width="2" transform="rotate(-20 20 10)"/><path fill="#9a8f93" d="M3 17c6 6 13 4 17 0l-1 5C12 26 4 24 3 17z"/><path stroke="#888" stroke-width="2" d="M15 8l9 14"/><g fill="none" stroke="#1f87c4" stroke-width="3"><ellipse cx="22" cy="29" rx="3" ry="5"/><ellipse cx="30" cy="25" rx="5" ry="3"/></g></svg></button>
      <button class="task open" aria-label="Explorador"><svg viewBox="0 0 36 36"><path fill="#f3c94b" d="M1 4h13l3 4h18v24H1z"/><path fill="#fde58e" d="M1 11h34v21H1z"/><path fill="#35a5dc" d="M7 20h22v13h-6v-6H13v6H7z"/></svg></button>
      <button class="task open" aria-label="Camtasia"><svg viewBox="0 0 36 36"><rect width="36" height="36" rx="3" fill="#53a70c"/><path fill="#fff" d="M28 5v5H14l-2 2v12l2 2h14v5H11l-4-4V9l4-4z"/></svg></button>
      <button class="task open" aria-label="Grabador"><svg viewBox="0 0 36 36"><rect width="36" height="36" rx="3" fill="#fb4d42"/><path fill="#fff" d="M28 5v5H14l-2 2v12l2 2h14v5H11l-4-4V9l4-4z"/></svg></button>
      <button class="task open" aria-label="Chrome"><svg viewBox="0 0 36 36"><circle cx="18" cy="18" r="17" fill="#fbc928"/><path fill="#e0442f" d="M3 10a17 17 0 0 1 30 0H18l-8 10z"/><path fill="#2ba14b" d="M3 10l8 13 8 4-4 8A17 17 0 0 1 3 10z"/><circle cx="18" cy="18" r="8" fill="#fff"/><circle cx="18" cy="18" r="6" fill="#3b7ded"/></svg></button>
      <button class="task open active" aria-label="ARCHICAD"><svg><use href="#logo"/></svg></button>

      <div class="tray">
        <svg class="people" viewBox="0 0 28 28"><circle cx="18" cy="6" r="4"/><circle cx="9" cy="14" r="4"/><path d="M2 26c0-9 14-9 14 0M15 14c4-4 10-1 11 4"/></svg>
        <svg viewBox="0 0 28 28"><path d="m5 19 9-10 9 10"/></svg>
        <svg viewBox="0 0 28 28"><path d="M8 9h16v11H6v-5M24 12h3v5h-3M2 6v5h5V6M4 11v4"/><path class="fill" d="M10 11h12v7H10z"/></svg>
        <svg viewBox="0 0 28 28"><path d="M5 23C5 12 13 5 24 5M10 23c0-8 6-13 14-13M15 23c0-5 4-8 9-8"/><circle class="fill" cx="22" cy="22" r="2"/></svg>
        <svg viewBox="0 0 28 28"><path d="M2 10h4l6-5v18l-6-5H2zM16 10c2 2 2 6 0 8M20 7c4 4 4 10 0 14M24 4c5 6 5 14 0 20"/></svg>
        <span class="lang">ESP<br>LAA</span>
        <time class="clock">11:47<br>16/05/2019</time>
        <button class="notice" aria-label="Notificaciones"><svg viewBox="0 0 28 28"><path class="fill" d="M2 2h24v19H13l-5 5v-5H2z"/><path class="ink" d="M6 8h16M6 12h16M6 16h10"/></svg><b>1</b></button>
        <span class="desktop-edge"></span>
      </div>
    </div>

    <section class="caption">
      <p>Dentro del programa, podremos modificar la forma en que los archivos IFC serán exportados e importados a través de los Traductores. Los Traductores definen las reglas que determinan qué elementos se considerarán dentro del traspaso y como serán interpretados.</p>
    </section>
  </body>
</html>
```

FILE: styles.css
```css
* {
  box-sizing: border-box;
}

body {
  margin: 0;
  min-height: 100vh;
  display: flex;
  flex-direction: column;
  position: relative;
  background: #f0f0f0;
  color: #1c1c22;
  font-family: "Open Sans", "Noto Sans", sans-serif;
  font-size: 18px;
}

h1,
h2,
p,
ul {
  margin: 0;
  padding: 0;
  font-weight: 400;
}

button {
  border: 0;
  padding: 0;
  background: none;
  color: inherit;
  font: inherit;
}

svg {
  width: 28px;
  height: 28px;
  flex: none;
  fill: none;
  stroke: #4a5057;
  stroke-width: 2px;
}

.sprite {
  position: absolute;
  width: 0;
  height: 0;
}

/* Variantes de trazo dentro de los iconos */
.blue {
  stroke: #4a90f4;
}

.bluefill {
  fill: #2f7ee6;
  stroke: none;
}

.bluebox {
  fill: #d4e6ff;
  stroke: #4a90f4;
}

.tan {
  stroke: #cfa673;
  stroke-width: 3px;
}

.solid {
  fill: #23272c;
}

.grey {
  fill: #858b91;
}

.dash {
  stroke-dasharray: 4 2;
}

.off svg {
  opacity: 0.4;
}

.caret {
  border: 6px solid transparent;
  border-top: 9px solid #000000;
  border-bottom: 0;
}

.caret.side {
  border: 5px solid transparent;
  border-left: 7px solid #222222;
  border-right: 0;
}

.off .caret {
  border-top-color: #808080;
}

/* Barra de título y menú */
.titlebar {
  display: flex;
  align-items: center;
  height: 36px;
  padding-right: 4px;
  background: #ffffff;
}

.app-logo {
  margin: 0 4px 0 1px;
}

.app-title {
  flex: 1;
  font-size: 18px;
}

.win-button {
  width: 73px;
}

.win-button svg {
  width: 16px;
  height: 16px;
  stroke: #222222;
  stroke-width: 1px;
}

.menubar {
  display: flex;
  align-items: center;
  gap: 16px;
  height: 30px;
  padding: 0 2px 0 9px;
  background: #ffffff;
}

.menubar a {
  color: inherit;
  text-decoration: none;
}

.doc-buttons {
  display: flex;
  margin-left: auto;
}

.doc-buttons svg {
  display: block;
  width: 18px;
  height: 18px;
  stroke: #222222;
}

/* Barra de herramientas */
.toolbar {
  display: flex;
  align-items: center;
  height: 52px;
  border-bottom: 2px solid #dedede;
}

.sep {
  width: 1px;
  height: 42px;
  margin: 0 8px 0 5px;
  background: #6a6a6a;
}

.sep.light {
  background: #c6c6c6;
}

.sep.first {
  height: 28px;
  margin-right: 2px;
}

.tb {
  display: flex;
  align-items: center;
  justify-content: center;
  width: 37px;
  height: 46px;
}

.tb.drop {
  width: 69px;
  justify-content: space-between;
  padding: 0 6px 0 8px;
}

.tb.on {
  background: #bedcf3;
  box-shadow: inset 0 0 0 1px #a5cfef;
}

/* Caja de información */
.infobox {
  height: 94px;
  padding: 1px 15px;
}

.infobox-title {
  font-size: 15px;
  line-height: 22px;
}

.infobox-row {
  display: flex;
  align-items: flex-end;
  gap: 4px;
  height: 57px;
}

.infobox-row::before {
  content: "";
  width: 1px;
  height: 38px;
  margin: 0 5px 16px -9px;
  background: #777777;
}

.mode {
  display: flex;
  align-items: center;
  justify-content: space-between;
  width: 62px;
  height: 28px;
  padding: 0 3px 0 10px;
  background: #e3e3e3;
  border: 1px solid #c6c6c6;
}

.mode svg {
  height: 22px;
}

.mode.active {
  justify-content: center;
  background: #cce5fa;
  border: 2px solid #5a9bd0;
}

.mode.tall {
  width: 75px;
  height: 44px;
  padding-left: 17px;
}

/* Zona de trabajo */
.workspace {
  flex: 1;
  display: grid;
  grid-template-columns: 74px 1fr 283px;
}

.toolbox,
.navigator,
.drawing {
  display: flex;
  flex-direction: column;
  min-width: 0;
}

.grip {
  width: 30px;
  height: 3px;
  margin: 6px 0 4px 21px;
  background: #c9c9c9;
}

.grip.wide {
  width: 108px;
  margin: 6px 0 9px 88px;
}

.tool-head {
  width: 72px;
  height: 31px;
  padding-left: 3px;
  margin-bottom: 3px;
  overflow: hidden;
  background: #d4d4d4;
  border-radius: 4px;
  font-size: 16px;
  line-height: 32px;
}

.tool-head.design {
  margin-top: 7px;
}

.tool {
  display: grid;
  place-items: center;
  width: 72px;
  height: 47px;
}

.tool svg {
  width: 44px;
  height: 32px;
}

.tool.selected {
  background: #bedcf3;
}

.tool.selected svg {
  height: 28px;
}

.tool-list {
  flex: 1;
  display: flex;
  flex-direction: column;
  justify-content: space-between;
}

.tool-list svg {
  fill: #fafafa;
}

.tabs {
  display: flex;
  height: 35px;
  background: #dadada;
}

.tab {
  display: flex;
  align-items: center;
  gap: 4px;
  width: 407px;
  padding: 2px 0 0 6px;
  border-right: 1px solid #c9c9c9;
  font-size: 15px;
}

.tab.current {
  background: #ffffff;
}

.tab-close {
  margin: 0 14px 0 auto;
}

.tab-menu {
  display: flex;
  align-items: center;
  justify-content: flex-end;
  gap: 8px;
  width: 77px;
  margin-left: auto;
  padding-right: 4px;
  background: #f0f0f0;
}

.tab-menu svg {
  width: 42px;
  stroke: #3f66f0;
}

.plan {
  flex: 1;
  width: 100%;
  height: auto;
  background: #ffffff;
}

.plan-grid {
  stroke: #f5f5f5;
}

.plan-handle {
  fill: #f2f2f2;
  stroke: none;
}

.handle-dash {
  stroke: #f5b47c;
  stroke-width: 3px;
  stroke-dasharray: 8 3;
}

.wall-line,
.origin {
  stroke: #000000;
}

.door-line {
  stroke: #f07010;
}

.speckle {
  stroke: #777777;
  stroke-width: 1px;
  stroke-dasharray: 2 11 1 7;
}

.speckle-tri {
  stroke: #777777;
  stroke-width: 1px;
}

.quickbar {
  display: flex;
  height: 31px;
}

.zoom-tools {
  display: flex;
  justify-content: space-around;
  width: 111px;
}

.zoom-tools button {
  display: flex;
  align-items: center;
}

.zoom-tools svg,
.quick svg {
  width: 24px;
  height: 24px;
}

.quick {
  flex: 1;
  display: flex;
  align-items: center;
  min-width: 0;
  padding: 0 8px 0 10px;
  border-left: 1px solid #a0a0a0;
  font-size: 15px;
  white-space: nowrap;
}

.quick span {
  flex: 1;
  padding-left: 4px;
}

.quick.short span {
  padding-left: 8px;
}

/* Navegador */
.navigator {
  border-top: 1px solid #dcdcdc;
  border-left: 1px solid #e0e0e0;
}

.nav-tabs {
  display: flex;
  height: 46px;
  margin-bottom: 2px;
}

.nav-chooser,
.nav-tab {
  display: flex;
  align-items: center;
  justify-content: center;
  width: 47px;
}

.nav-chooser {
  width: 67px;
  gap: 14px;
  margin: 0 26px 0 2px;
  padding-left: 10px;
  border: 1px solid #c0c0c0;
  background: #e6e6e6;
}

.nav-tab.on {
  background: #bedcf3;
}

.nav-body {
  display: flex;
  padding-right: 2px;
}

.nav-tree {
  flex: 1;
  min-width: 0;
  overflow: hidden;
  background: #ffffff;
  list-style: none;
  font-size: 15px;
}

.nav-tree li {
  display: flex;
  align-items: center;
  height: 35px;
  white-space: nowrap;
}

.nav-tree .l0 {
  padding-left: 10px;
}

.nav-tree .l1 {
  padding-left: 26px;
}

.nav-tree .l2 {
  padding-left: 43px;
}

.nav-tree .selected {
  background: #d9d9d9;
  font-weight: 700;
}

.chev {
  width: 14px;
  height: 14px;
  margin-right: 9px;
}

.chev.thin {
  stroke: #8a8a8a;
}

.ico {
  width: 27px;
  margin-right: 8px;
}

.vscroll {
  display: flex;
  flex-direction: column;
  align-items: center;
  justify-content: space-between;
  width: 25px;
  padding: 6px 0;
}

.vscroll svg,
.hscroll svg {
  width: 14px;
  height: 14px;
}

.vscroll .thumb {
  width: 25px;
  height: 517px;
  margin: 6px 0 auto;
  background: #cdcdcd;
}

.up,
.back {
  transform: rotate(180deg);
}

.hscroll {
  display: flex;
  align-items: center;
  gap: 6px;
  height: 22px;
  padding: 0 34px 0 6px;
}

.hscroll .thumb {
  width: 112px;
  height: 22px;
  margin-right: auto;
  background: #cdcdcd;
}

.nav-actions {
  display: flex;
  justify-content: flex-end;
  align-items: center;
  gap: 20px;
  height: 67px;
  padding-right: 12px;
}

.nav-actions svg {
  display: block;
}

.delete svg {
  stroke: #f4441e;
  stroke-width: 3px;
}

.props-head {
  display: flex;
  align-items: center;
  gap: 12px;
  height: 27px;
  margin: 0 3px 6px 0;
  padding-left: 8px;
  background: #d4d4d4;
  font-size: 16px;
}

.props-row {
  display: flex;
  align-items: center;
  gap: 8px;
  padding: 0 4px 0 6px;
  font-size: 15px;
}

.props-row svg {
  width: 22px;
  height: 22px;
}

.props-row input {
  width: 183px;
  height: 30px;
  margin-left: auto;
  padding: 0 5px;
  border: 1px solid #7a7a7a;
  background: #ffffff;
  color: inherit;
  font: inherit;
}

.props-button {
  height: 34px;
  margin: 5px 5px 12px 3px;
  border: 1px solid #adadad;
  background: #e1e1e1;
  font-size: 15px;
}

/* Barra de estado */
.statusbar {
  display: flex;
  align-items: center;
  height: 36px;
  padding-left: 3px;
  border-top: 1px solid #dcdcdc;
}

.statusbar p {
  flex: 1;
}

.statusbar svg {
  margin-right: 7px;
}

.thick {
  stroke-width: 4px;
}

.brand {
  width: 205px;
  margin-right: 36px;
  border: 1px solid #dcdcdc;
  border-width: 0 1px;
  color: #a9adb0;
  font-family: Lato, sans-serif;
  font-size: 21px;
  line-height: 34px;
  text-align: center;
}

/* Barra de tareas */
.taskbar {
  display: flex;
  height: 62px;
  background: linear-gradient(90deg, #251d2d 0%, #1c2a33 33%, #17322b 55%, #183126 75%, #193226 100%);
  color: #ffffff;
}

.task {
  display: grid;
  place-items: center;
  width: 75px;
  border-bottom: 4px solid transparent;
}

.task svg {
  width: 36px;
  height: 36px;
  stroke: none;
}

.task.small svg {
  width: 30px;
  height: 30px;
}

.task .white {
  stroke: #ffffff;
}

.task.snip {
  width: 84px;
}

.task.open {
  width: 66px;
  margin-right: 12px;
  border-bottom-color: #78b6ea;
}

.task.snip + .open {
  margin-left: 3px;
}

.task.active {
  width: 75px;
  margin-left: -6px;
  background: #465358;
}

.tray {
  display: flex;
  align-items: center;
  gap: 9px;
  margin-left: auto;
}

.tray svg {
  stroke: #ffffff;
}

.people {
  margin-right: 22px;
}

.tray .fill {
  fill: #ffffff;
}

.tray .ink {
  stroke: #193226;
}

.lang,
.clock {
  font-size: 17px;
  line-height: 27px;
  text-align: center;
}

.lang {
  margin: 0 16px 0 7px;
}

.notice {
  position: relative;
  margin: 0 21px 0 22px;
}

.notice svg {
  display: block;
}

.notice b {
  position: absolute;
  left: 12px;
  top: 12px;
  width: 28px;
  height: 28px;
  border: 1px solid #8b8b8b;
  border-radius: 50%;
  background: #2b2f2e;
  font-size: 17px;
  font-weight: 400;
  line-height: 26px;
}

.desktop-edge {
  align-self: stretch;
  width: 6px;
  border-left: 1px solid #6d7d75;
}

/* Rótulo sobre el programa: la primera capa oscurece y la segunda tiñe de rojo */
.caption {
  position: absolute;
  top: 151px;
  right: 214px;
  bottom: 201px;
  left: 183px;
  padding: 131px 81px 0 72px;
}

.caption::before,
.caption::after {
  content: "";
  position: absolute;
  inset: 0;
}

.caption::before {
  background: #5f716e;
  mix-blend-mode: multiply;
}

.caption::after {
  background: #bc1c23;
  mix-blend-mode: screen;
}

.caption p {
  position: relative;
  z-index: 1;
  color: #ffffff;
  font-family: "Noto Sans CJK SC", sans-serif;
  font-size: 76px;
  font-weight: 700;
  line-height: 104px;
  text-align: justify;
}
```
